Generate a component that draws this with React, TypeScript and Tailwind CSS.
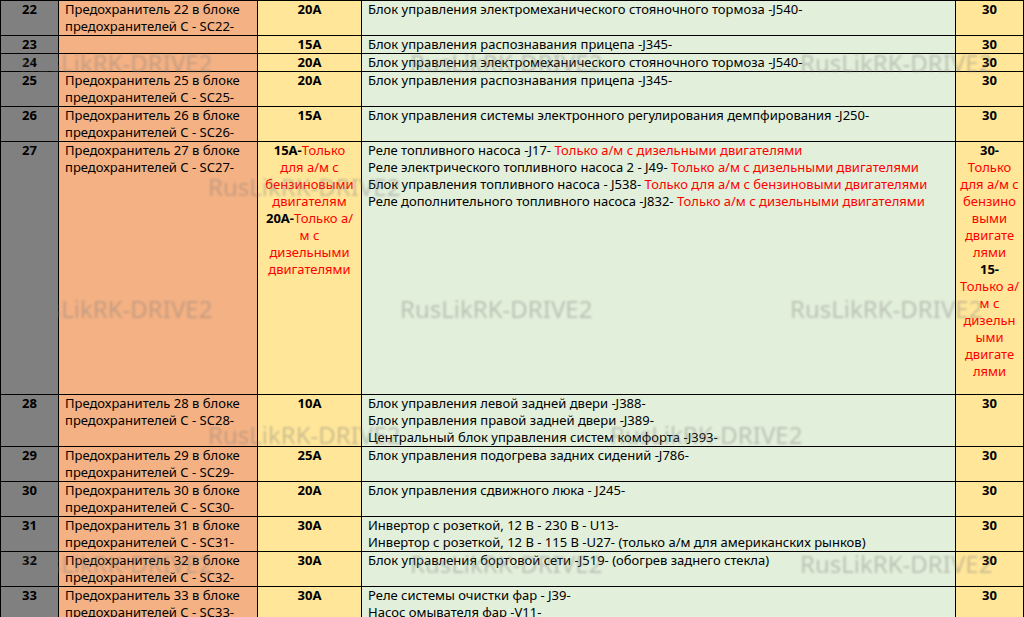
import React from "react";

type Row = { n: string; name?: string; amp: React.ReactNode; desc: React.ReactNode; last: React.ReactNode; h: number };

const R = ({ children }: { children: React.ReactNode }) => <span className="text-[#ff0000]">{children}</span>;

const rows: Row[] = [
  { n: "22", name: "Предохранитель 22 в блоке предохранителей С - SC22-", amp: "20A", desc: "Блок управления электромеханического стояночного тормоза -J540-", last: "30", h: 35 },
  { n: "23", amp: "15A", desc: "Блок управления распознавания прицепа -J345-", last: "30", h: 18 },
  { n: "24", amp: "20A", desc: "Блок управления электромеханического стояночного тормоза -J540-", last: "30", h: 17 },
  { n: "25", name: "Предохранитель 25 в блоке предохранителей С - SC25-", amp: "20A", desc: "Блок управления распознавания прицепа -J345-", last: "30", h: 35 },
  { n: "26", name: "Предохранитель 26 в блоке предохранителей С - SC26-", amp: "15A", desc: "Блок управления системы электронного регулирования демпфирования -J250-", last: "30", h: 35 },
  {
    n: "27",
    name: "Предохранитель 27 в блоке предохранителей С - SC27-",
    amp: (
      <>
        15A-<R>Только для а/м с бензиновыми двигателям</R>
        <br />
        20A-<R>Только а/м с дизельными двигателями</R>
      </>
    ),
    desc: (
      <>
        Реле топливного насоса -J17- <R>Только а/м с дизельными двигателями</R>
        <br />
        Реле электрического топливного насоса 2 - J49- <R>Только а/м с дизельными двигателями</R>
        <br />
        Блок управления топливного насоса - J538- <R>Только для а/м с бензиновыми двигателями</R>
        <br />
        Реле дополнительного топливного насоса -J832- <R>Только а/м с дизельными двигателями</R>
      </>
    ),
    last: (
      <>
        30-
        <br />
        <R>Только для а/м с бензино выми двигате лями</R>
        <br />
        15-
        <br />
        <R>Только а/м с дизельн ыми двигате лями</R>
      </>
    ),
    h: 253,
  },
  {
    n: "28",
    name: "Предохранитель 28 в блоке предохранителей С - SC28-",
    amp: "10A",
    desc: (
      <>
        Блок управления левой задней двери -J388-
        <br />
        Блок управления правой задней двери -J389-
        <br />
        Центральный блок управления систем комфорта -J393-
      </>
    ),
    last: "30",
    h: 52,
  },
  { n: "29", name: "Предохранитель 29 в блоке предохранителей С - SC29-", amp: "25A", desc: "Блок управления подогрева задних сидений -J786-", last: "30", h: 35 },
  { n: "30", name: "Предохранитель 30 в блоке предохранителей С - SC30-", amp: "20A", desc: "Блок управления сдвижного люка - J245-", last: "30", h: 34 },
  {
    n: "31",
    name: "Предохранитель 31 в блоке предохранителей С - SC31-",
    amp: "30A",
    desc: (
      <>
        Инвертор с розеткой, 12 В - 230 В - U13-
        <br />
        Инвертор с розеткой, 12 В - 115 В -U27- (только а/м для американских рынков)
      </>
    ),
    last: "30",
    h: 34,
  },
  { n: "32", name: "Предохранитель 32 в блоке предохранителей С - SC32-", amp: "30A", desc: "Блок управления бортовой сети -J519- (обогрев заднего стекла)", last: "30", h: 35 },
  {
    n: "33",
    name: "Предохранитель 33 в блоке предохранителей С - SC33-",
    amp: "30A",
    desc: (
      <>
        Реле системы очистки фар - J39-
        <br />
        Насос омывателя фар -V11-
      </>
    ),
    last: "30",
    h: 40,
  },
];

const marks: [number, number][] = [
  [20, 54], [410, 54], [800, 54],
  [208, 178],
  [20, 300], [400, 300], [790, 300],
  [208, 426], [610, 426],
  [20, 555], [410, 555], [800, 555],
];

export default function App() {
  return (
    <div className="relative w-[1024px] h-[617px] overflow-hidden bg-white [font-family:'Liberation_Serif','Times_New_Roman',serif] text-[13px] leading-[17px] text-black">
      <table className="border-collapse table-fixed w-[1023px]">
        <colgroup>
          <col className="w-[58px]" />
          <col className="w-[199px]" />
          <col className="w-[104px]" />
          <col className="w-[594px]" />
          <col className="w-[68px]" />
        </colgroup>
        <tbody>
          {rows.map((r) => (
            <tr key={r.n} style={{ height: r.h }}>
              <td className="border border-black bg-[#808080] align-top text-center font-bold">{r.n}</td>
              <td className="border border-black bg-[#f4b183] align-top px-1.5">{r.name}</td>
              <td className="border border-black bg-[#ffe699] align-top text-center font-bold px-1 [&_span]:font-normal">{r.amp}</td>
              <td className="border border-black bg-[#e2efda] align-top px-1.5">{r.desc}</td>
              <td className="border border-black bg-[#ffe699] align-top text-center font-bold px-1 [&_span]:font-normal">{r.last}</td>
            </tr>
          ))}
        </tbody>
      </table>
      {marks.map(([x, y], i) => (
        <div
          key={i}
          className="absolute text-[24px] text-[#808080] opacity-40 blur-[1px] whitespace-nowrap pointer-events-none"
          style={{ left: x, top: y }}
        >
          RusLikRK-DRIVE2
        </div>
      ))}
    </div>
  );
}
